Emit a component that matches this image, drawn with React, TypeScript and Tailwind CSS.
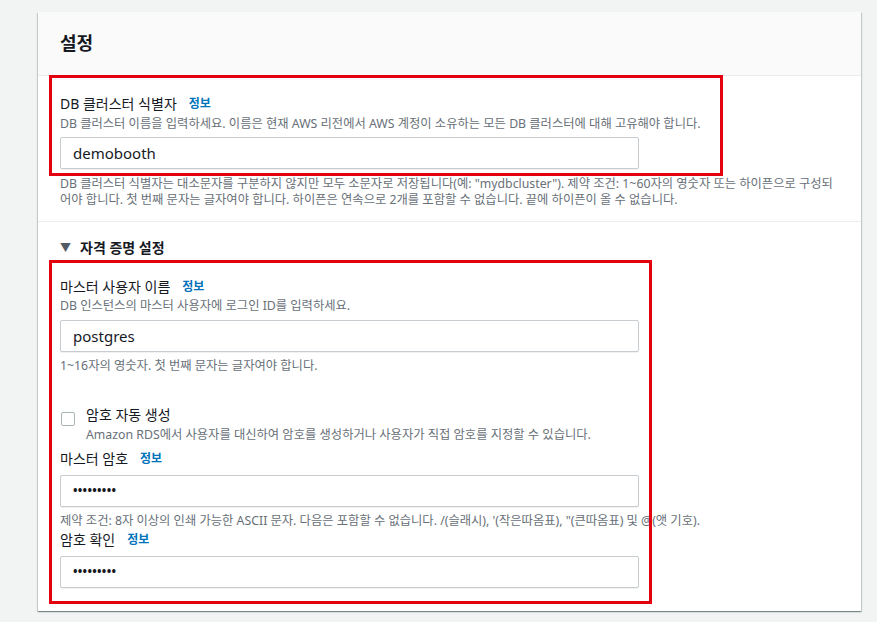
import React from "react"

const font = "font-['Noto_Sans','Noto_Sans_CJK_KR',sans-serif]"

function Info() {
  return <span className="ml-[12px] text-[12px] font-bold text-[#0073bb]">정보</span>
}

function Field({ value, secret }: { value: string; secret?: boolean }) {
  return (
    <div className="flex h-[32px] w-[579px] items-center rounded-[2px] border border-[#c6cccf] bg-white px-[12px] shadow-[0_1px_1px_rgba(0,0,0,0.06)]">
      {secret ? (
        <span className="text-[12px] font-bold tracking-[0.3px] text-[#16191f]">•••••••••</span>
      ) : (
        <span className="text-[15px] text-[#16191f]">{value}</span>
      )}
    </div>
  )
}

export default function App() {
  return (
    <div className={`h-[622px] w-full bg-white ${font}`}>
      <div className="h-[622px] w-[877px] bg-[#f2f3f3] pl-[38px] pt-[12px]">
        <div className="relative h-[599px] w-[823px] bg-white shadow-[0_1px_1px_0_rgba(0,28,36,0.3),1px_1px_1px_0_rgba(0,28,36,0.15),-1px_1px_1px_0_rgba(0,28,36,0.15)]">
          <div className="flex h-[64px] items-center border-b border-[#eaeded] bg-[#fafafa] px-[22px]">
            <h2 className="text-[18px] font-bold text-[#16191f]">설정</h2>
          </div>

          <div className="border-b border-[#eaeded] px-[22px] pb-[13px] pt-[18px]">
            <div className="flex items-center text-[14px] leading-[20px] text-[#16191f]">
              DB 클러스터 식별자
              <Info />
            </div>
            <p className="mt-[2px] text-[12.3px] leading-[16px] text-[#687078]">
              DB 클러스터 이름을 입력하세요. 이름은 현재 AWS 리전에서 AWS 계정이 소유하는 모든 DB 클러스터에 대해 고유해야 합니다.
            </p>
            <div className="mt-[5px]">
              <Field value="demobooth" />
            </div>
            <p className="mt-[7px] text-[12.3px] leading-[16px] text-[#687078]">
              <span className="block whitespace-nowrap">
                DB 클러스터 식별자는 대소문자를 구분하지 않지만 모두 소문자로 저장됩니다(예: "mydbcluster"). 제약 조건: 1~60자의 영숫자 또는 하이픈으로 구성되
              </span>
              <span className="block whitespace-nowrap">
                어야 합니다. 첫 번째 문자는 글자여야 합니다. 하이픈은 연속으로 2개를 포함할 수 없습니다. 끝에 하이픈이 올 수 없습니다.
              </span>
            </p>
          </div>

          <div className="px-[22px] pt-[16px]">
            <div className="flex items-center text-[14px] font-bold leading-[20px] text-[#16191f]">
              <span className="mr-[9px] text-[11px] text-[#545b64]">▼</span>
              자격 증명 설정
            </div>

            <div className="mt-[19px] flex items-center text-[14px] leading-[20px] text-[#16191f]">
              마스터 사용자 이름
              <Info />
            </div>
            <p className="mt-[1px] text-[12.3px] leading-[16px] text-[#687078]">
              DB 인스턴스의 마스터 사용자에 로그인 ID를 입력하세요.
            </p>
            <div className="mt-[6px]">
              <Field value="postgres" />
            </div>
            <p className="mt-[6px] text-[12.3px] leading-[16px] text-[#687078]">
              1~16자의 영숫자. 첫 번째 문자는 글자여야 합니다.
            </p>

            <div className="mt-[31px] flex gap-[11px]">
              <div className="mt-[7px] ml-[1px] h-[14px] w-[14px] shrink-0 rounded-[2px] border border-[#aab7b8] bg-white" />
              <div>
                <div className="text-[14px] leading-[20px] text-[#16191f]">암호 자동 생성</div>
                <p className="mt-[2px] text-[12.3px] leading-[16px] text-[#687078]">
                  Amazon RDS에서 사용자를 대신하여 암호를 생성하거나 사용자가 직접 암호를 지정할 수 있습니다.
                </p>
              </div>
            </div>

            <div className="mt-[6px] flex items-center text-[14px] leading-[20px] text-[#16191f]">
              마스터 암호
              <Info />
            </div>
            <div className="mt-[6px]">
              <Field value="" secret />
            </div>
            <p className="mt-[6px] text-[12.3px] leading-[16px] text-[#687078]">
              제약 조건: 8자 이상의 인쇄 가능한 ASCII 문자. 다음은 포함할 수 없습니다. /(슬래시), '(작은따옴표), "(큰따옴표) 및 @(앳 기호).
            </p>
            <div className="mt-[1px] flex items-center text-[14px] leading-[20px] text-[#16191f]">
              암호 확인
              <Info />
            </div>
            <div className="mt-[6px]">
              <Field value="" secret />
            </div>
          </div>

          {/* annotation boxes */}
          <div className="pointer-events-none absolute left-[11px] top-[63px] h-[101px] w-[674px] border-[3px] border-[#e3000f]" />
          <div className="pointer-events-none absolute left-[11px] top-[248px] h-[344px] w-[603px] border-[3px] border-[#e3000f]" />
        </div>
      </div>
    </div>
  )
}
